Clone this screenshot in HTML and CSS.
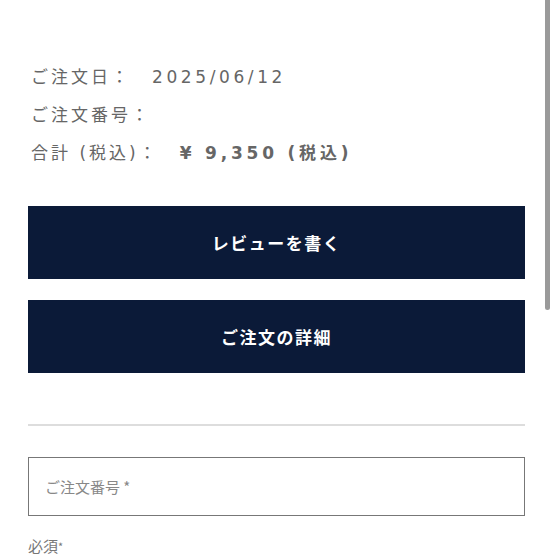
FILE: index.html
```html
<!DOCTYPE html>
<html lang="ja">

<head>
    <meta charset="UTF-8">
    <meta name="viewport" content="width=device-width, initial-scale=1.0">
    <title>ご注文</title>
    <link rel="stylesheet" href="styles.css">
</head>

<body>
    <div class="order">
        <ul class="order-info">
            <li class="order-info-item"><span class="order-label">ご注文日：</span><span class="order-value">2025/06/12</span></li>
            <li class="order-info-item"><span class="order-label">ご注文番号：</span></li>
            <li class="order-info-item"><span class="order-label">合計 (税込)：</span><strong class="order-value">¥ 9,350 (税込)</strong></li>
        </ul>
        <div class="order-actions">
            <a class="order-button" href="#">レビューを書く</a>
            <a class="order-button" href="#">ご注文の詳細</a>
        </div>
        <hr class="order-divider">
        <form class="order-form">
            <input class="order-input" type="text" placeholder="ご注文番号 *">
            <p class="order-note">必須<span class="order-note-mark">*</span></p>
        </form>
    </div>
    <div class="scroll-thumb"></div>
</body>

</html>
```

FILE: styles.css
```css
html,
body {
    height: 100%;
    overflow: hidden;
}

body {
    margin: 0;
    background: #fff;
    font-family: "Liberation Sans", "Noto Sans CJK JP", sans-serif;
    color: #666;
}

.order {
    padding: 58px 30px 0 28px;
}

.order-info {
    list-style: none;
    margin: 0;
    padding: 0;
}

.order-info-item {
    font-family: "DejaVu Sans", "Noto Sans CJK JP", sans-serif;
    font-size: 17px;
    line-height: 38px;
    letter-spacing: 3px;
    white-space: pre;
}

.order-label {
    padding-left: 3px;
}

.order-value {
    margin-left: 21px;
    letter-spacing: 3.6px;
}

strong.order-value {
    font-weight: bold;
    letter-spacing: 3.8px;
}

.order-actions {
    display: flex;
    flex-direction: column;
    gap: 21px;
    margin-top: 34px;
}

.order-button {
    display: flex;
    align-items: center;
    justify-content: center;
    height: 73px;
    background: #0b1a38;
    color: #fff;
    font-size: 17px;
    font-weight: bold;
    letter-spacing: 1.5px;
    text-decoration: none;
}

.order-divider {
    margin: 51px 0 0;
    border: 0;
    border-top: 2px solid #ddd;
}

.order-form {
    margin-top: 31px;
}

.order-input {
    display: block;
    box-sizing: border-box;
    width: 100%;
    height: 59px;
    margin: 0;
    padding: 0 16px;
    border: 1px solid #777;
    border-radius: 0;
    font-family: "Noto Sans CJK JP", sans-serif;
    font-size: 15px;
    color: #333;
    outline: none;
}

.order-input::placeholder {
    color: #888;
}

.order-note {
    margin: 20px 0 0;
    font-family: "Noto Sans CJK JP", sans-serif;
    font-size: 15px;
    line-height: 20px;
    color: #777;
}

.order-note-mark {
    font-size: 11px;
    vertical-align: top;
}

.scroll-thumb {
    position: fixed;
    top: 0;
    right: 5px;
    width: 5px;
    height: 310px;
    border-radius: 0 0 3px 3px;
    background: #9a9a9a;
}
```
